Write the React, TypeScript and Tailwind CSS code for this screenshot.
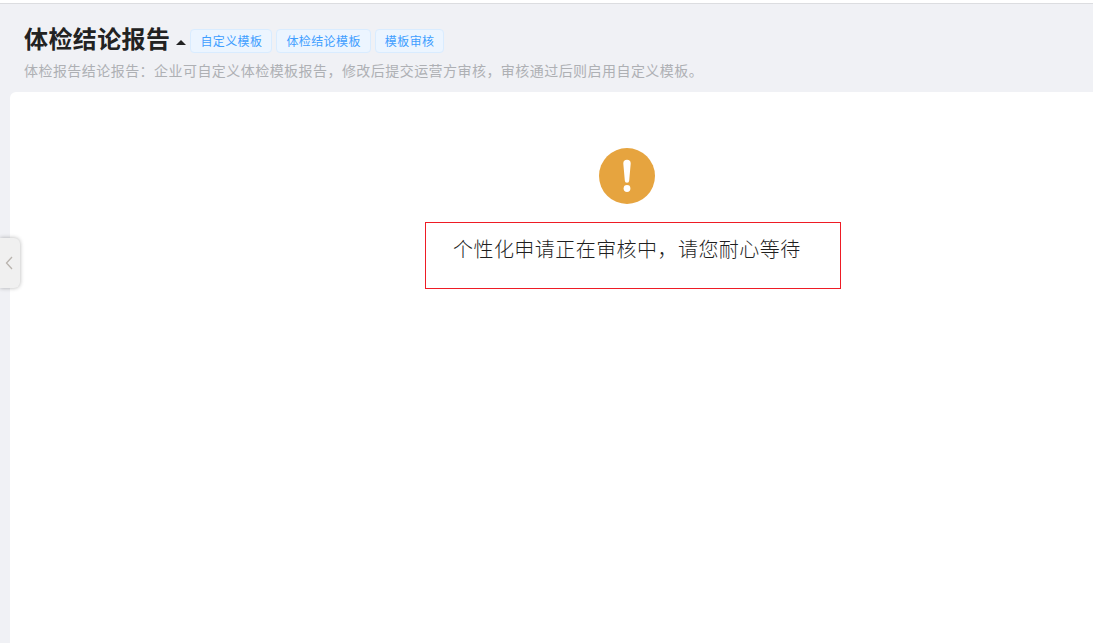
import React from "react";

const FONT = "font-['Noto_Sans_CJK_SC','Liberation_Sans',sans-serif]";

const tags = ["自定义模板", "体检结论模板", "模板审核"];

const App = () => {
  return (
    <div className={`h-[643px] w-[1093px] overflow-hidden bg-white ${FONT}`}>
      <div className="h-[3px] bg-white" />
      <div className="relative flex h-[640px] flex-col border-t border-[#dcdde0] bg-[#f0f1f5]">
        {/* === Header ===*/}
        <div className="h-[88px] shrink-0 pl-6 pt-[18px]">
          <div className="flex h-[32px] items-center">
            <h1 className="text-[24px] leading-8 font-bold text-[#222] tracking-[0.4px]">
              体检结论报告
            </h1>
            <span className="mt-2 ml-[6px] h-0 w-0 border-x-[5px] border-b-[5px] border-x-transparent border-b-[#222]" />
            <div className="mt-[5px] ml-[4px] flex gap-1">
              {tags.map((tag) => (
                <span
                  key={tag}
                  className="flex h-6 items-center rounded border border-[#d9ecff] bg-[#ecf5ff] px-[9px] text-[12px] tracking-[0.4px] text-[#409eff]"
                >
                  {tag}
                </span>
              ))}
            </div>
          </div>
          <p className="mt-[6px] text-[14px] leading-5 tracking-[0.45px] text-[#aeb0b4]">
            体检报告结论报告：企业可自定义体检模板报告，修改后提交运营方审核，审核通过后则启用自定义模板。
          </p>
        </div>

        {/* === Content ===*/}
        <div className="ml-[10px] flex flex-1 flex-col items-center rounded-tl-md bg-white pl-[163px] pt-[56px]">
          <svg className="mr-[12px] h-14 w-14" viewBox="0 0 56 56">
            <circle cx="28" cy="28" r="28" fill="#e6a43f" />
            <path d="M24.3 15.5a3.7 3.7 0 0 1 7.4 0l-1.5 17a2.2 2.2 0 0 1-4.4 0z" fill="#fff" />
            <circle cx="28" cy="40.5" r="3.4" fill="#fff" />
          </svg>
          <div className="mt-[18px] h-[67px] w-[416px] border border-[#ee1c25] pl-[27px] pt-[10px] text-[20px] leading-[32px] tracking-[0.45px] font-light text-[#1f1f1f]">
            个性化申请正在审核中，请您耐心等待
          </div>
        </div>

        {/* === Collapse toggle ===*/}
        <div className="absolute top-[234px] left-0 flex h-[50px] w-5 items-center justify-center rounded-r-md bg-[#f0f0f0] shadow-[0_0_4px_rgba(0,0,0,0.3)]">
          <svg className="mr-[2px] h-[14px] w-2" viewBox="0 0 8 14" fill="none" stroke="#b9b4ae" strokeWidth="1.3">
            <path d="M7 1 1.5 7 7 13" />
          </svg>
        </div>
      </div>
    </div>
  );
};

export default App;
